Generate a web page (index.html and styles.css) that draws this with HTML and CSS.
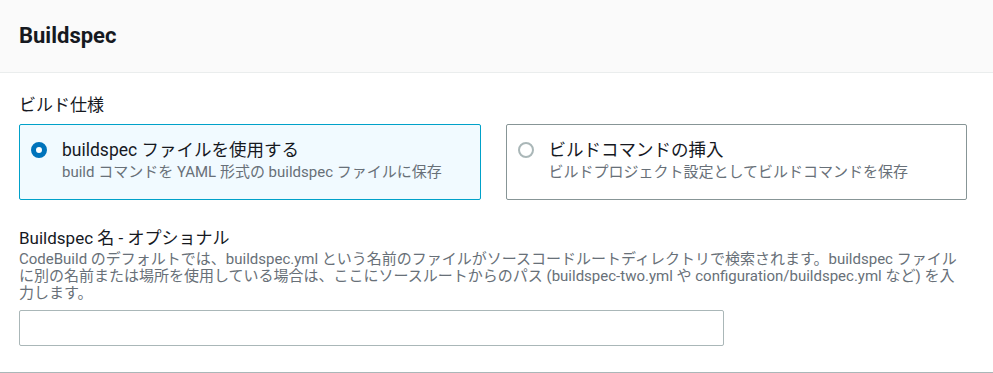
FILE: index.html
```html
<!DOCTYPE html>
<html lang="ja">

<head>
    <meta charset="UTF-8">
    <meta name="viewport" content="width=device-width, initial-scale=1.0">
    <title>Buildspec</title>
    <link rel="stylesheet" href="styles.css">
</head>

<body>
    <div class="panel">
        <div class="panel-header">
            <h2>Buildspec</h2>
        </div>
        <div class="panel-body">
            <div class="field-label">ビルド仕様</div>
            <div class="tiles">
                <label class="tile selected">
                    <span class="radio"></span>
                    <span class="tile-text">
                        <span class="tile-title">buildspec ファイルを使用する</span>
                        <span class="tile-desc">build コマンドを YAML 形式の buildspec ファイルに保存</span>
                    </span>
                </label>
                <label class="tile">
                    <span class="radio"></span>
                    <span class="tile-text">
                        <span class="tile-title">ビルドコマンドの挿入</span>
                        <span class="tile-desc">ビルドプロジェクト設定としてビルドコマンドを保存</span>
                    </span>
                </label>
            </div>

            <div class="field">
                <div class="field-label">Buildspec 名 - オプショナル</div>
                <p class="field-desc">CodeBuild のデフォルトでは、buildspec.yml という名前のファイルがソースコードルートディレクトリで検索されます。buildspec ファイル<br>に別の名前または場所を使用している場合は、ここにソースルートからのパス (buildspec-two.yml や configuration/buildspec.yml など) を入<br>力します。</p>
                <input type="text" class="text-input">
            </div>
        </div>
    </div>
</body>

</html>
```

FILE: styles.css
```css
body {
    margin: 0;
    font-family: Roboto, "Noto Sans CJK JP", sans-serif;
    color: #16191f;
    background-color: #fff;
}

.panel {
    box-sizing: border-box;
    min-height: 373px;
    border-bottom: 1px solid #aab7b8;
}

.panel-header {
    box-sizing: border-box;
    height: 73px;
    padding: 0 19px;
    display: flex;
    align-items: center;
    background-color: #fafafa;
    border-bottom: 1px solid #eaeded;
}

.panel-header h2 {
    margin: 0;
    font-size: 22px;
    font-weight: 700;
    line-height: 28px;
}

.panel-body {
    padding: 21px 26px 0 19px;
}

.field-label {
    font-size: 17px;
    line-height: 22px;
}

.tiles {
    display: grid;
    grid-template-columns: 1fr 1fr;
    gap: 25px;
    margin-top: 8px;
}

.tile {
    display: flex;
    gap: 15px;
    padding: 14px 11px 16px 11px;
    border: 1px solid #879596;
    border-radius: 2px;
    background-color: #fff;
    cursor: pointer;
}

.tile.selected {
    border-color: #00a1c9;
    background-color: #f1faff;
}

.radio {
    box-sizing: border-box;
    flex: none;
    width: 16px;
    height: 16px;
    margin-top: 3px;
    border: 2px solid #aab7b8;
    border-radius: 50%;
    background-color: #fff;
}

.tile.selected .radio {
    border: 5px solid #0073bb;
}

.tile-text {
    display: flex;
    flex-direction: column;
}

.tile-title {
    font-size: 17.5px;
    line-height: 22px;
}

.tile-desc {
    font-size: 15px;
    line-height: 22px;
    color: #687078;
}

.field {
    margin-top: 27px;
}

.field-desc {
    margin: 2px 0 0;
    font-size: 15px;
    line-height: 17px;
    color: #687078;
    white-space: nowrap;
}

.text-input {
    display: block;
    box-sizing: border-box;
    width: 705px;
    height: 36px;
    margin-top: 8px;
    padding: 0 10px;
    border: 1px solid #aab7b8;
    border-radius: 2px;
    font: inherit;
    font-size: 15px;
    background-color: #fff;
}
```
